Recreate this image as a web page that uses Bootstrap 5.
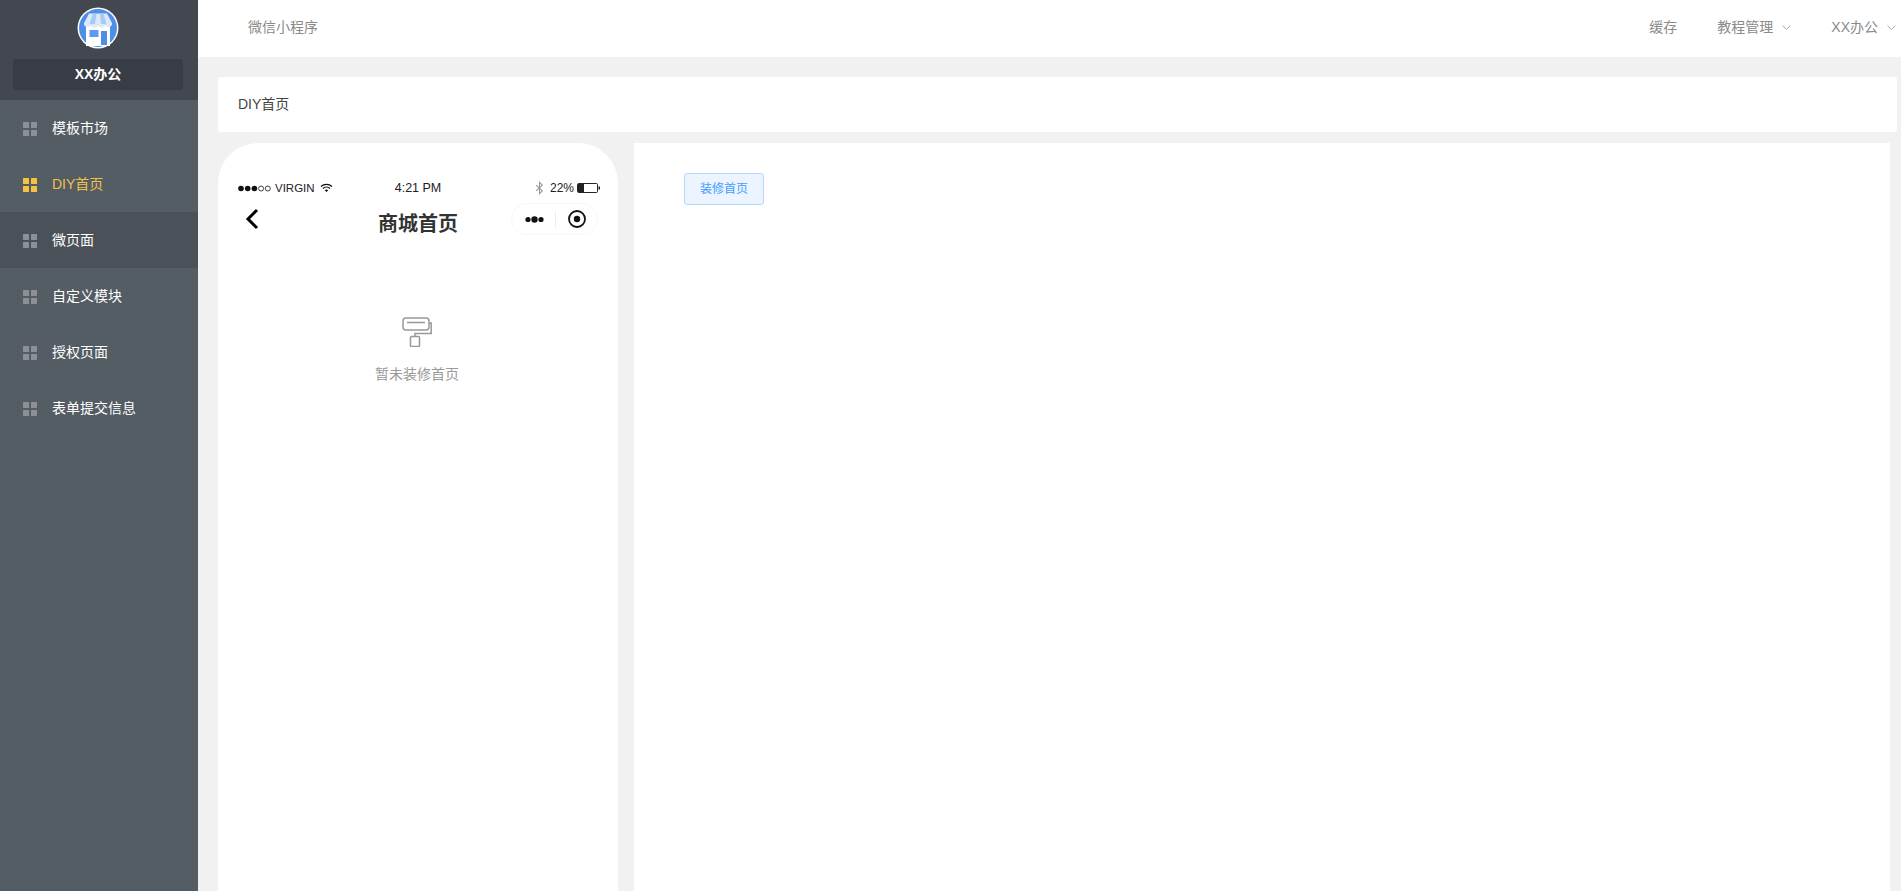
<!DOCTYPE html>
<html lang="zh-CN">
<head>
<meta charset="utf-8">
<title>DIY首页</title>
<link href="https://cdn.jsdelivr.net/npm/bootstrap@5.3.0/dist/css/bootstrap.min.css" rel="stylesheet">
<style>
html,body{height:891px;overflow:hidden}
body{background:#f1f1f1;font-family:"Liberation Sans","Noto Sans CJK SC",sans-serif;font-size:14px;color:#333}
.shell{height:891px}
.side{width:198px;flex:none;background:#545c64}
.brand{height:100px;flex:none;background:#43474f;padding:7px 2px 0 0}
.logo-wrap{width:42px;height:42px;display:block}
.brand-name{width:170px;height:31px;margin-top:10px;background:#383c44;border-radius:2px;color:#fff;font-weight:700;font-size:14px;line-height:31px}
.menu-row{height:56px;padding:1px 0 0 23px;color:#fff;font-size:14px;gap:15px}
.menu-row.on{color:#f0c24b}
.menu-row.hov{background:#4b5158}
.grid-ico{width:14px;height:14px;display:grid;grid-template-columns:6px 6px;grid-template-rows:6px 6px;gap:2px}
.grid-ico i{background:#8c8f96;display:block;border-radius:.5px}
.on .grid-ico i{background:#f5c242}
.main{min-width:0}
.top{height:57px;flex:none;background:#fff;padding:0 5px 2px 50px;color:#8a8a8a;font-size:14px}
.top-r{gap:40px}
.chev{width:9px;height:5px;margin-left:9px;display:inline-block}
.body-area{padding:20px 4px 0 20px}
.crumb{height:55px;background:#fff;padding-left:20px;font-size:14px;color:#444;border-radius:2px}
.panes{gap:16px;margin-top:11px;padding-right:7px}
.phone{width:400px;flex:none;height:760px;background:#fff;border-radius:40px 40px 0 0;padding:0 17px}
.status{height:18px;margin-top:36px;font-size:11.5px;color:#222;line-height:18px}
.st-l{width:118px;padding-left:3px;gap:3px}
.st-r{width:118px;font-size:12px}
.time-txt{font-size:12.5px}
.wifi-ico{margin-left:2px}
.bt-ico{margin-right:6px}
.batt-ico{margin-left:3px}
.nav-row{height:38px;margin-top:6px}
.back-ico{left:10px;top:5px}
.title{font-size:20px;font-weight:700;color:#333;left:0;right:0;top:6px;text-align:center}
.capsule{width:87px;height:32px;border:1px solid #f7f7f7;border-radius:16px;top:0;right:3px;padding:0 10px 0 13px}
.cap-sep{width:1px;height:17px;background:#ededed}
.empty{margin-top:76px;padding-right:2px;color:#999;font-size:14px}
.empty p{margin:17px 0 0}
.panel{background:#fff;height:760px;padding:30px 50px}
.deco-btn{width:80px;height:32px;background:#ecf5ff;border:1px solid #b3d8ff;border-radius:3px;color:#409eff;font-size:12px;padding:0;--bs-btn-hover-bg:#ecf5ff;--bs-btn-hover-color:#409eff;--bs-btn-hover-border-color:#b3d8ff}
</style>
</head>
<body>
<div class="shell d-flex">
  <aside class="side d-flex flex-column">
    <div class="brand d-flex flex-column align-items-center">
      <svg class="logo-wrap" viewBox="0 0 42 42">
        <circle cx="21" cy="21" r="20.500" fill="#fff"/>
        <circle cx="21" cy="21" r="19" fill="#4e8fe6"/>
        <rect x="9" y="18" width="24" height="21" fill="#fff"/>
        <rect x="12.500" y="23" width="9" height="7" fill="#5c9bf0"/>
        <rect x="24" y="24" width="6" height="14" fill="#4e8fe6"/>
        <path d="M12 6.500h18l5 9.500a3.500 3.500 0 0 1-7 1 3.500 3.500 0 0 1-7 0 3.500 3.500 0 0 1-7 0 3.500 3.500 0 0 1-7-1z" fill="#dbe9fb"/>
        <path d="M16 6.500h3.500l-1.500 10.500h-5.500zM23 6.500h3.500l3 10.500H24z" fill="#a9c9f5"/>
      </svg>
      <div class="brand-name text-center">XX办公</div>
    </div>
    <nav class="d-flex flex-column">
      <a class="menu-row d-flex align-items-center text-decoration-none"><span class="grid-ico"><i></i><i></i><i></i><i></i></span><span class="text-white">模板市场</span></a>
      <a class="menu-row on d-flex align-items-center text-decoration-none"><span class="grid-ico"><i></i><i></i><i></i><i></i></span><span>DIY首页</span></a>
      <a class="menu-row hov d-flex align-items-center text-decoration-none"><span class="grid-ico"><i></i><i></i><i></i><i></i></span><span class="text-white">微页面</span></a>
      <a class="menu-row d-flex align-items-center text-decoration-none"><span class="grid-ico"><i></i><i></i><i></i><i></i></span><span class="text-white">自定义模块</span></a>
      <a class="menu-row d-flex align-items-center text-decoration-none"><span class="grid-ico"><i></i><i></i><i></i><i></i></span><span class="text-white">授权页面</span></a>
      <a class="menu-row d-flex align-items-center text-decoration-none"><span class="grid-ico"><i></i><i></i><i></i><i></i></span><span class="text-white">表单提交信息</span></a>
    </nav>
  </aside>
  <div class="main flex-grow-1 d-flex flex-column">
    <header class="top d-flex align-items-center justify-content-between">
      <span>微信小程序</span>
      <div class="top-r d-flex align-items-center">
        <span>缓存</span>
        <span class="d-flex align-items-center">教程管理<svg class="chev" viewBox="0 0 9 5"><path d="M.5.500 4.500 4.500 8.500.500" fill="none" stroke="#aaa"/></svg></span>
        <span class="d-flex align-items-center">XX办公<svg class="chev" viewBox="0 0 9 5"><path d="M.5.500 4.500 4.500 8.500.500" fill="none" stroke="#aaa"/></svg></span>
      </div>
    </header>
    <div class="body-area">
      <div class="crumb d-flex align-items-center">DIY首页</div>
      <div class="panes d-flex">
        <section class="phone">
          <div class="status d-flex justify-content-between align-items-center">
            <div class="st-l d-flex align-items-center">
              <svg width="34" height="7" viewBox="0 0 34 7"><g fill="#111"><circle cx="3" cy="3.500" r="2.800"/><circle cx="9.700" cy="3.500" r="2.800"/><circle cx="16.400" cy="3.500" r="2.800"/></g><g fill="none" stroke="#111" stroke-width=".8"><circle cx="23.100" cy="3.500" r="2.500"/><circle cx="29.800" cy="3.500" r="2.500"/></g></svg>
              <span>VIRGIN</span>
              <svg width="13" height="10" viewBox="0 0 13 10" class="wifi-ico"><g fill="none" stroke="#111" stroke-width="1.300"><path d="M1 3.500a8 8 0 0 1 11 0"/><path d="M3 5.500a5 5 0 0 1 7 0"/></g><path d="M4.800 7.200a2.500 2.500 0 0 1 3.400 0L6.500 9z" fill="#111"/></svg>
            </div>
            <span class="time-txt">4:21 PM</span>
            <div class="st-r d-flex align-items-center justify-content-end">
              <svg width="9" height="14" viewBox="0 0 8 12" class="bt-ico"><path d="M1 3.500 6.500 8.500 4 11V1l2.500 2.500L1 8.500" fill="none" stroke="#999"/></svg>
              <span>22%</span>
              <svg width="24" height="10" viewBox="0 0 24 10" class="batt-ico"><rect x=".5" y=".5" width="20" height="9" rx="1" fill="#fff" stroke="#222"/><rect x="1" y="1" width="6" height="8" fill="#222"/><rect x="21.500" y="3.500" width="1.500" height="3" fill="#222"/></svg>
            </div>
          </div>
          <div class="nav-row position-relative">
            <svg width="14" height="22" viewBox="0 0 14 22" class="back-ico position-absolute"><path d="M12 2 3 11l9 9" fill="none" stroke="#000" stroke-width="3"/></svg>
            <div class="title position-absolute">商城首页</div>
            <div class="capsule position-absolute d-flex align-items-center justify-content-between">
              <svg width="19" height="7" viewBox="0 0 19 7"><g fill="#111"><circle cx="3" cy="3.500" r="2.600"/><circle cx="9.500" cy="3.500" r="3.200"/><circle cx="16" cy="3.500" r="2.600"/></g></svg>
              <span class="cap-sep"></span>
              <svg width="20" height="20" viewBox="0 0 20 20"><circle cx="10" cy="10" r="8" fill="none" stroke="#111" stroke-width="1.800"/><circle cx="10" cy="10" r="3.200" fill="#111"/></svg>
            </div>
          </div>
          <div class="empty d-flex flex-column align-items-center">
            <svg width="30" height="30" viewBox="0 0 30 30"><g fill="none" stroke="#999" stroke-width="1.500"><rect x="1" y="1" width="26" height="12" rx="3"/><path d="M5 5.500h18"/><path d="M27 6h2.200v10.500H13v3"/><rect x="8.500" y="19.500" width="9" height="10" rx="1"/></g></svg>
            <p>暂未装修首页</p>
          </div>
        </section>
        <section class="panel flex-grow-1">
          <button type="button" class="btn deco-btn">装修首页</button>
        </section>
      </div>
    </div>
  </div>
</div>
<script src="https://cdn.jsdelivr.net/npm/bootstrap@5.3.0/dist/js/bootstrap.bundle.min.js"></script>
</body>
</html>
